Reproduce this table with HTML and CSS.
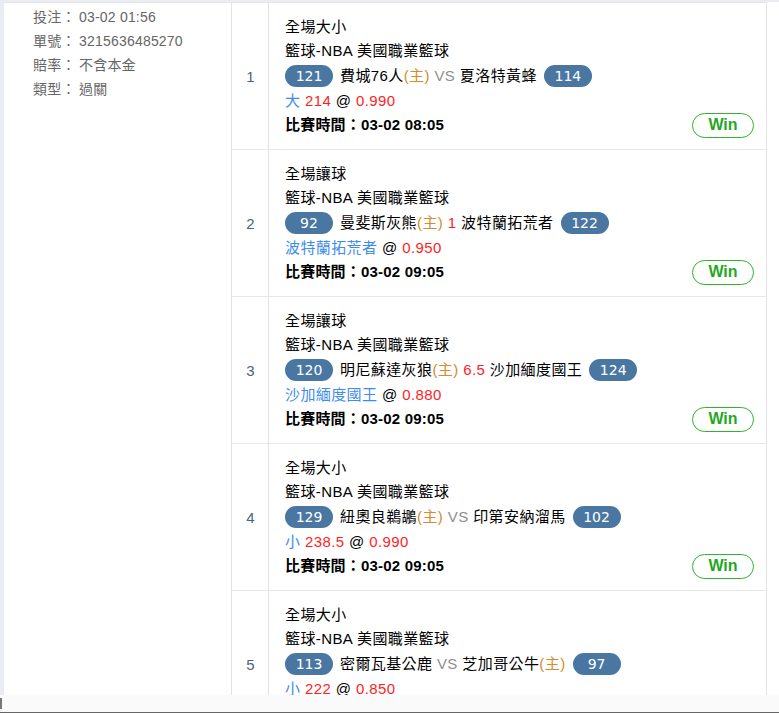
FILE: index.html
```html
<!DOCTYPE html>
<html lang="zh-Hant">
<head>
<meta charset="utf-8">
<title>注單</title>
<link rel="stylesheet" href="styles.css">
</head>
<body>
<div class="viewport">
  <div class="sheet">
    <div class="info">
      <div class="info-line"><span class="lbl">投注：</span><span class="val">03-02 01:56</span></div>
      <div class="info-line"><span class="lbl">單號：</span><span class="val">3215636485270</span></div>
      <div class="info-line"><span class="lbl">賠率：</span><span class="val">不含本金</span></div>
      <div class="info-line"><span class="lbl">類型：</span><span class="val">過關</span></div>
    </div>
    <div class="rows">
      <div class="row">
        <div class="idx">1</div>
        <div class="detail">
          <div class="line">全場大小</div>
          <div class="line">籃球-NBA 美國職業籃球</div>
          <div class="teams"><span class="badge">121</span><span>費城76人<span class="home">(主)</span> <span class="vs">VS</span> 夏洛特黃蜂</span><span class="badge">114</span></div>
          <div class="line"><span class="pick">大</span> <span class="red">214</span> @ <span class="red">0.990</span></div>
          <div class="line last"><span class="time">比賽時間：03-02 08:05</span><span class="win">Win</span></div>
        </div>
      </div>
      <div class="row">
        <div class="idx">2</div>
        <div class="detail">
          <div class="line">全場讓球</div>
          <div class="line">籃球-NBA 美國職業籃球</div>
          <div class="teams"><span class="badge">92</span><span>曼斐斯灰熊<span class="home">(主)</span> <span class="red">1</span> 波特蘭拓荒者</span><span class="badge">122</span></div>
          <div class="line"><span class="pick">波特蘭拓荒者</span> @ <span class="red">0.950</span></div>
          <div class="line last"><span class="time">比賽時間：03-02 09:05</span><span class="win">Win</span></div>
        </div>
      </div>
      <div class="row">
        <div class="idx">3</div>
        <div class="detail">
          <div class="line">全場讓球</div>
          <div class="line">籃球-NBA 美國職業籃球</div>
          <div class="teams"><span class="badge">120</span><span>明尼蘇達灰狼<span class="home">(主)</span> <span class="red">6.5</span> 沙加緬度國王</span><span class="badge">124</span></div>
          <div class="line"><span class="pick">沙加緬度國王</span> @ <span class="red">0.880</span></div>
          <div class="line last"><span class="time">比賽時間：03-02 09:05</span><span class="win">Win</span></div>
        </div>
      </div>
      <div class="row">
        <div class="idx">4</div>
        <div class="detail">
          <div class="line">全場大小</div>
          <div class="line">籃球-NBA 美國職業籃球</div>
          <div class="teams"><span class="badge">129</span><span>紐奧良鵜鶘<span class="home">(主)</span> <span class="vs">VS</span> 印第安納溜馬</span><span class="badge">102</span></div>
          <div class="line"><span class="pick">小</span> <span class="red">238.5</span> @ <span class="red">0.990</span></div>
          <div class="line last"><span class="time">比賽時間：03-02 09:05</span><span class="win">Win</span></div>
        </div>
      </div>
      <div class="row">
        <div class="idx">5</div>
        <div class="detail">
          <div class="line">全場大小</div>
          <div class="line">籃球-NBA 美國職業籃球</div>
          <div class="teams"><span class="badge">113</span><span>密爾瓦基公鹿 <span class="vs">VS</span> 芝加哥公牛<span class="home">(主)</span></span><span class="badge">97</span></div>
          <div class="line"><span class="pick">小</span> <span class="red">222</span> @ <span class="red">0.850</span></div>
          <div class="line last"><span class="time">比賽時間：03-02 09:05</span><span class="win">Win</span></div>
        </div>
      </div>
    </div>
  </div>
</div>
<div class="hbar"><span class="thumb"></span></div>
</body>
</html>
```

FILE: styles.css
```css
html, body {
  margin: 0;
  padding: 0;
  background: #ffffff;
  height: 713px;
  overflow: hidden;
}

body {
  font-family: "Liberation Sans", "Noto Sans CJK TC", Arial, sans-serif;
  color: #000;
}

.viewport {
  height: 695px;
  overflow: hidden;
  background: #ffffff;
  border-top: 2px solid #e9edf3;
  box-sizing: border-box;
}

.sheet {
  display: flex;
  align-items: stretch;
  width: 767px;
  border-left: 4px solid #e9edf3;
  border-top: 1px solid #e6e6e6;
  box-sizing: border-box;
}

.info {
  width: 228px;
  flex: none;
  padding: 2px 0 0 29px;
  box-sizing: border-box;
  border-right: 1px solid #e3e3e3;
  font-size: 14px;
  color: #666;
  letter-spacing: 0.2px;
}

.info-line {
  height: 24px;
  line-height: 24px;
  display: flex;
  white-space: nowrap;
}

.info .lbl {
  width: 46px;
  flex: none;
}

.rows {
  flex: 1;
  border-right: 1px solid #e3e3e3;
}

.row {
  display: flex;
  border-bottom: 1px solid #e8e8e8;
  height: 147px;
  box-sizing: border-box;
}

.idx {
  width: 37px;
  flex: none;
  border-right: 1px solid #e3e3e3;
  display: flex;
  align-items: center;
  justify-content: center;
  font-size: 15px;
  color: #4d6180;
  padding-left: 1px;
  box-sizing: border-box;
}

.detail {
  flex: 1;
  padding: 12px 12px 0 16px;
  font-size: 15px;
  letter-spacing: 0.4px;
}

.line {
  height: 24px;
  line-height: 24px;
  white-space: nowrap;
}

.teams {
  height: 26px;
  display: flex;
  align-items: center;
  gap: 7px;
  white-space: nowrap;
  line-height: 22px;
}

.badge {
  display: inline-flex;
  align-items: center;
  justify-content: center;
  width: 48px;
  height: 22px;
  border-radius: 11px;
  background: #4a77a1;
  color: #fff;
  font-family: "DejaVu Sans", sans-serif;
  font-size: 14px;
  letter-spacing: 0;
  margin-top: -1px;
}

.home {
  color: #d48a2e;
}

.vs {
  color: #8f8f8f;
}

.pick {
  color: #3d8cf0;
}

.red {
  color: #ff1e1e;
}

.last {
  display: flex;
  justify-content: space-between;
  align-items: center;
}

.time {
  font-weight: bold;
  letter-spacing: 0.2px;
}

.win {
  display: inline-flex;
  align-items: center;
  justify-content: center;
  width: 62px;
  height: 25px;
  box-sizing: border-box;
  border: 1px solid #2fb52a;
  border-radius: 13px;
  color: #1fa81f;
  font-weight: bold;
  font-size: 16px;
  letter-spacing: 0;
  margin-top: 0;
}

.hbar {
  height: 18px;
  background: #fafafa;
  border-bottom: 1px solid #666;
  box-sizing: border-box;
  position: relative;
}

.thumb {
  position: absolute;
  left: 0;
  top: 3px;
  width: 2px;
  height: 11px;
  background: #777;
}
```
